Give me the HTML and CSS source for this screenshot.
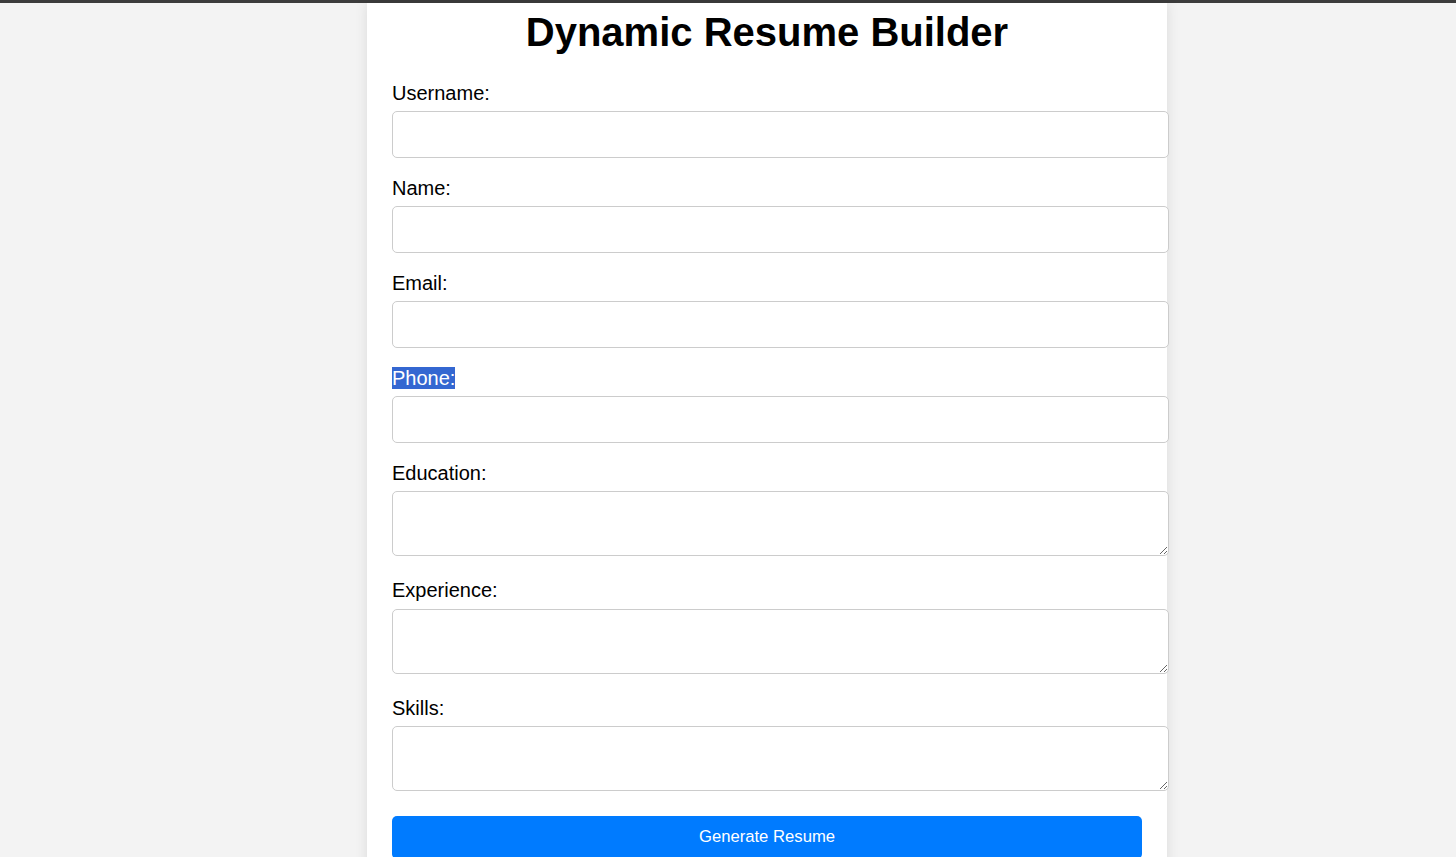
FILE: index.html
```html
<!DOCTYPE html>
<html lang="en">
<head>
<meta charset="utf-8">
<title>Dynamic Resume Builder</title>
<link rel="stylesheet" href="styles.css">
</head>
<body>
<div class="topbar"></div>
<div class="page">
  <div class="container">
    <h1 class="title">Dynamic Resume Builder</h1>
    <form class="form">
      <label class="label" for="username">Username:</label>
      <input class="input" id="username" type="text">
      <label class="label" for="name">Name:</label>
      <input class="input" id="name" type="text">
      <label class="label" for="email">Email:</label>
      <input class="input" id="email" type="email">
      <label class="label" for="phone"><span class="selected">Phone:</span></label>
      <input class="input" id="phone" type="tel">
      <label class="label" for="education">Education:</label>
      <textarea class="textarea" id="education"></textarea>
      <label class="label" for="experience">Experience:</label>
      <textarea class="textarea" id="experience"></textarea>
      <label class="label" for="skills">Skills:</label>
      <textarea class="textarea" id="skills"></textarea>
      <button class="button" type="button">Generate Resume</button>
    </form>
  </div>
</div>
</body>
</html>
```
FILE: styles.css
```css
html, body {
  margin: 0;
  padding: 0;
  height: 100%;
  overflow: hidden;
}
body {
  background: #f3f3f3;
  font-family: "Liberation Sans", Arial, sans-serif;
  color: #000;
}
.topbar {
  height: 3px;
  background: #3c3c3c;
}
.page {
  padding-left: 78px;
}
.container {
  width: 750px;
  margin: 0 auto;
  padding: 6px 25px 40px;
  background: #fff;
  box-shadow: 0 0 12px rgba(0, 0, 0, 0.1);
  min-height: 900px;
}
.title {
  margin: 0 0 27px;
  font-size: 40px;
  line-height: 46px;
  font-weight: bold;
  text-align: center;
}
.form {
  display: flex;
  flex-direction: column;
  align-items: flex-start;
}
.label {
  display: block;
  font-size: 20px;
  line-height: 23px;
  margin-bottom: 6.25px;
}
.selected {
  background: #3467d1;
  color: #fff;
}
.input,
.textarea {
  display: block;
  width: 777px;
  box-sizing: border-box;
  border: 1px solid #cccccc;
  border-radius: 5px;
  background: #fff;
  font-family: "Liberation Sans", Arial, sans-serif;
  font-size: 16px;
  padding: 12px;
}
.input {
  height: 47px;
  margin: 0 0 18.75px;
}
.textarea {
  height: 65px;
  margin: 0 0 23px;
}
.button {
  margin-top: 2px;
  width: 750px;
  height: 43px;
  border: none;
  border-radius: 5px;
  background: #007bff;
  color: #fff;
  font-family: "Liberation Sans", Arial, sans-serif;
  font-size: 16.67px;
}
```
